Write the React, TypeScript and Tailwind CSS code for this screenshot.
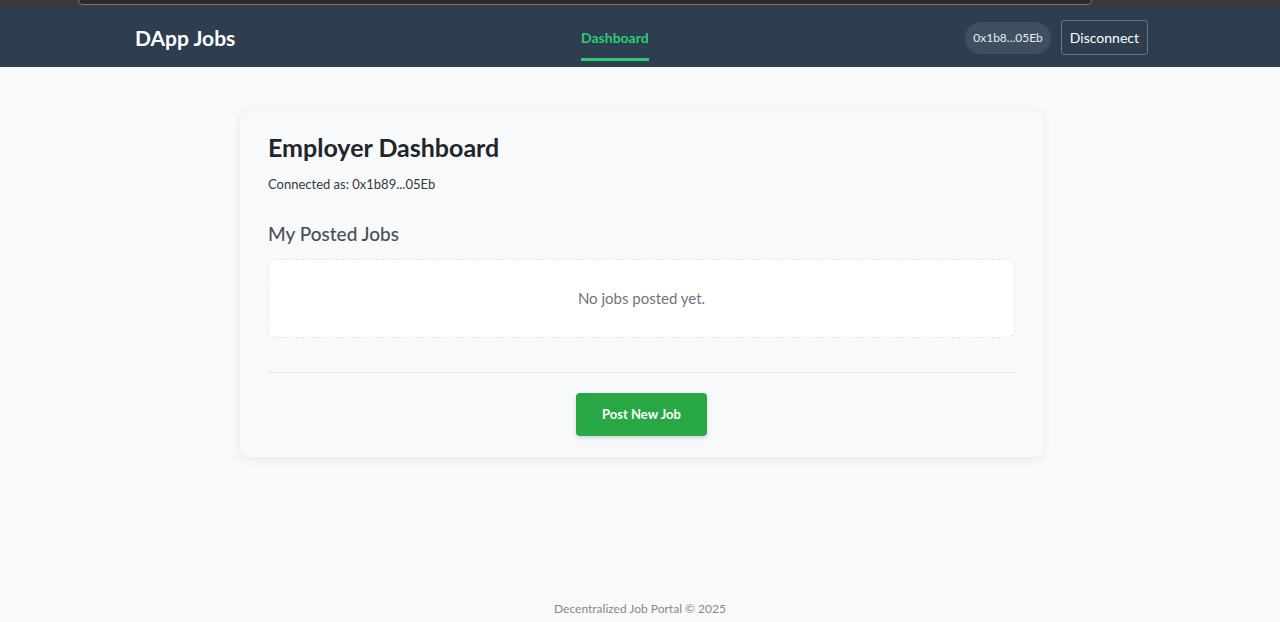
import React from "react";

const App = () => {
  return (
    <div className="flex min-h-[622px] flex-col bg-[#f8f9fa] font-['Lato',sans-serif]">
      <div className="h-2 bg-[#3a3a3a] pl-[78px] pr-[188px]">
        <div className="h-[5px] rounded-b-[8px] border-x border-b border-[#7a7a7a] bg-[#2a2a2a]"></div>
      </div>
      <header className="h-[59px] bg-[#2c3e50]">
        <div className="ml-[135px] flex h-full w-[1013px] items-center">
          <div className="w-[446px] text-[21px] font-bold text-white">DApp Jobs</div>
          <nav className="flex h-full items-center">
            <a className="mt-[6px] border-b-[3px] border-[#2ecc71] pb-[10px] pt-[6px] text-[14px] font-bold text-[#2ecc71]">
              Dashboard
            </a>
          </nav>
          <div className="flex flex-1 items-center justify-end gap-[10px]">
            <span className="rounded-full bg-[#3e5060] px-[8px] py-[7px] text-[12px] text-[#e8ecef]">0x1b8...05Eb</span>
            <button className="rounded-[3px] border border-[#66768a] px-[8px] py-[6px] text-[14px] text-white">Disconnect</button>
          </div>
        </div>
      </header>
      <main className="flex flex-1 justify-center pl-[3px] pt-[44px]">
        <div className="h-fit w-[803px] rounded-[8px] bg-[#f8f9fa] px-7 pb-[21px] pt-[21px] shadow-[0_2px_10px_rgba(0,0,0,0.07)]">
          <h1 className="text-[25px] font-bold leading-[30px] text-[#212529]">Employer Dashboard</h1>
          <p className="mt-[13px] text-[13px] text-[#343a40]">Connected as: 0x1b89...05Eb</p>
          <h2 className="mt-[25px] text-[19px] font-medium text-[#495057]">My Posted Jobs</h2>
          <div className="mt-[11px] flex h-[79px] items-center justify-center rounded-[8px] border border-dashed border-[#e3e6ea] bg-white text-[15px] text-[#6c757d]">
            No jobs posted yet.
          </div>
          <div className="mt-[34px] border-t border-[#e5e7eb]"></div>
          <div className="mt-[20px] flex justify-center">
            <button className="h-[43px] w-[131px] rounded-[4px] bg-[#28a745] text-[13px] font-bold text-white shadow-[0_2px_4px_rgba(0,0,0,0.15)]">
              Post New Job
            </button>
          </div>
        </div>
      </main>
      <footer className="pb-[4px] pt-[10px] text-center text-[12px] text-[#888]">Decentralized Job Portal © 2025</footer>
    </div>
  );
};

export default App;
